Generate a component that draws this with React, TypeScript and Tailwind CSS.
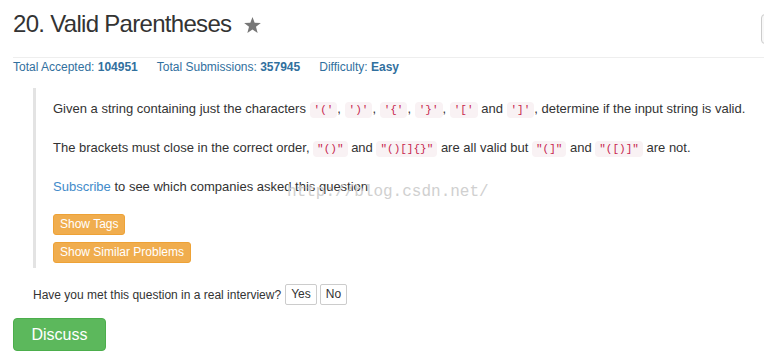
import React from "react";

const SANS = { fontFamily: '"Liberation Sans", Arial, sans-serif' };

function Code({ children }: { children: React.ReactNode }) {
  return (
    <code className="rounded-[4px] bg-[#f9f2f4] px-[4px] py-[2px] font-['Liberation_Mono',monospace] text-[11px] text-[#c7254e]">
      {children}
    </code>
  );
}

function StarIcon() {
  return (
    <svg width="17" height="16" viewBox="0 0 24 23" className="block fill-[#777]">
      <polygon points="12,0 15.1,8.1 24,8.6 17,14.1 19.4,23 12,18 4.6,23 7,14.1 0,8.6 8.9,8.1" />
    </svg>
  );
}

function Stat({ label, value }: { label: string; value: string }) {
  return (
    <span className="mr-[19px]">
      {label} <b>{value}</b>
    </span>
  );
}

export default function App() {
  return (
    <div className="relative h-[354px] w-[764px] overflow-hidden bg-white text-[#333]" style={SANS}>
      <div className="pl-[13px]">
        <header className="flex h-[58px] items-start border-b border-[#eee]">
          <h1 className="pt-[10px] text-[24px] leading-[28px] tracking-[-0.7px] font-normal">
            20. Valid Parentheses
          </h1>
          <span className="ml-[13px] mt-[17px] block">
            <StarIcon />
          </span>
          <div className="ml-auto mr-[-37px] mt-[14px] h-[30px] w-[40px] rounded-[4px] border border-[#ccc] bg-[#f8f8f8]" />
        </header>

        <div className="pt-[1px] text-[12px] leading-[17px] text-[#31709e]">
          <Stat label="Total Accepted:" value="104951" />
          <Stat label="Total Submissions:" value="357945" />
          <span>
            Difficulty: <b>Easy</b>
          </span>
        </div>

        <div className="ml-[20px] mt-[12px] border-l-[3px] border-[#e3e3e3] pb-[5px] pl-[17px] pt-[11px] text-[13px] leading-[20px]">
          <p className="mb-[18px]">
            Given a string containing just the characters <Code>'('</Code>, <Code>')'</Code>,{" "}
            <Code>'{'{'}'</Code>, <Code>'{'}'}'</Code>, <Code>'['</Code> and <Code>']'</Code>, determine
            if the input string is valid.
          </p>
          <p className="mb-[18px]">
            The brackets must close in the correct order, <Code>"()"</Code> and <Code>"()[]{"{}"}"</Code> are
            all valid but <Code>"(]"</Code> and <Code>"([)]"</Code> are not.
          </p>
          <p className="mb-[17px]">
            <a className="text-[#428bca]">Subscribe</a> to see which companies asked this question
          </p>
          <div className="flex flex-col items-start gap-[7px]">
            <button className="rounded-[3px] border border-[#eea236] bg-[#f0ad4e] px-[6px] py-[1px] text-[12px] leading-[17px] text-white">
              Show Tags
            </button>
            <button className="rounded-[3px] border border-[#eea236] bg-[#f0ad4e] px-[6px] py-[1px] text-[12px] leading-[17px] text-white">
              Show Similar Problems
            </button>
          </div>
        </div>

        <div className="ml-[20px] mt-[16px] flex items-center text-[12px]">
          <span>Have you met this question in a real interview?</span>
          <button className="ml-[4px] h-[21px] rounded-[2px] border border-[#ccc] bg-white px-[5px] leading-[19px]">
            Yes
          </button>
          <button className="ml-[3px] h-[21px] rounded-[2px] border border-[#ccc] bg-white px-[5px] leading-[19px]">
            No
          </button>
        </div>

        <button className="mt-[13px] flex h-[33px] w-[93px] items-center justify-center rounded-[4px] border border-[#4cae4c] bg-[#5cb85c] text-[16px] text-white">
          Discuss
        </button>
      </div>

      <div className="pointer-events-none absolute left-[287px] top-[184px] font-['Liberation_Mono',monospace] text-[16px] leading-[16px] text-[#d0d0d0]">
        http://blog.csdn.net/
      </div>
    </div>
  );
}
